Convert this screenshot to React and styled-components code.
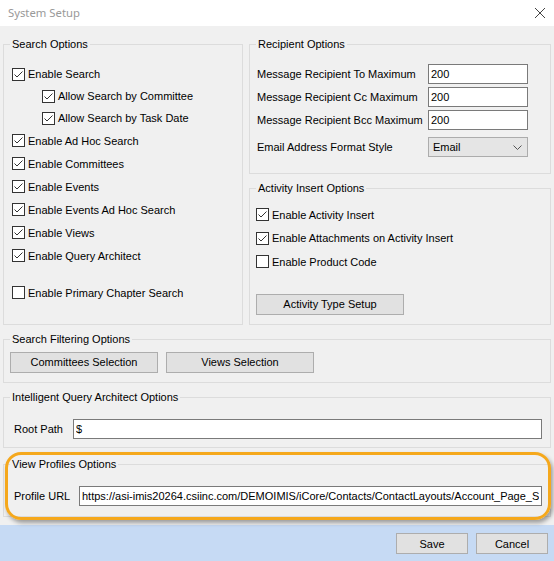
import React from 'react';
import styled, { createGlobalStyle } from 'styled-components';

const GlobalStyle = createGlobalStyle`
  html, body { margin: 0; padding: 0; background: #f0f0f0; }
  body { font-family: "Liberation Sans", Arial, sans-serif; font-size: 11px; color: #000; }
  * { box-sizing: border-box; }
`;

const Window = styled.div`
  width: 554px;
  height: 561px;
  display: flex;
  flex-direction: column;
  background: #f0f0f0;
  overflow: hidden;
`;

const TitleBar = styled.div`
  height: 26px;
  flex: none;
  background: #fff;
  display: flex;
  align-items: center;
  justify-content: space-between;
  padding: 0 9px 0 8px;
`;

const TitleText = styled.span`
  font-family: "Noto Sans", "Open Sans", sans-serif;
  font-size: 11.3px;
  color: #999;
  line-height: 16px;
`;

const Body = styled.div`
  flex: 1;
  display: flex;
  flex-direction: column;
  padding: 18px 3px 0 3px;
`;

const TopGrid = styled.div`
  display: grid;
  grid-template-columns: 240px 302px;
  column-gap: 6px;
`;

const RightCol = styled.div`
  display: flex;
  flex-direction: column;
  gap: 14px;
`;

const GroupBox = styled.section`
  position: relative;
  display: flex;
  flex-direction: column;
  border: 1px solid #dcdcdc;
  margin-top: ${p => p.$mt || 0}px;
  ${p => (p.$grow ? 'flex: 1;' : '')}
`;

const GroupTitle = styled.div`
  align-self: flex-start;
  margin: -7px 0 0 6px;
  padding: 0 2px;
  background: #f0f0f0;
  line-height: 13px;
  white-space: nowrap;
`;

const Content = styled.div`
  display: flex;
  flex-direction: column;
  padding: ${p => p.$pad};
`;

const CheckRow = styled.label`
  display: flex;
  align-items: center;
  gap: 3px;
  height: ${p => p.$h}px;
  padding-left: ${p => p.$indent || 0}px;
  margin-top: ${p => p.$mt || 0}px;
  white-space: nowrap;
`;

const Box = styled.span`
  flex: none;
  width: 13px;
  height: 13px;
  border: 1px solid #333;
  background: #fff;
  display: inline-flex;
`;

const FieldGrid = styled.div`
  display: grid;
  grid-template-columns: 171px 100px;
  grid-auto-rows: 20px;
  row-gap: 3px;
  align-items: center;
  margin-top: ${p => p.$mt || 0}px;
`;

const FieldLabel = styled.span`
  white-space: nowrap;
`;

const TextInput = styled.input`
  width: 100%;
  height: 20px;
  border: 1px solid #7a7a7a;
  background: #fff;
  padding: 0 2px;
  margin: 0;
  font-family: "Liberation Sans", Arial, sans-serif;
  font-size: 11px;
  color: #000;
  outline: none;
  min-width: 0;
  ${p => (p.$flex ? 'flex: 1;' : '')}
`;

const SelectBox = styled.div`
  width: 100px;
  height: 20px;
  display: flex;
  align-items: center;
  justify-content: space-between;
  padding: 0 5px 0 4px;
  background: #e5e5e5;
  border: 1px solid #acacac;
`;

const Button = styled.button`
  width: ${p => p.$w}px;
  height: 21px;
  flex: none;
  margin: 0;
  margin-top: ${p => p.$mt || 0}px;
  padding: 0;
  background: #e1e1e1;
  border: 1px solid #adadad;
  border-radius: 0;
  font-family: "Liberation Sans", Arial, sans-serif;
  font-size: 11px;
  color: #000;
`;

const ButtonRow = styled.div`
  display: flex;
  gap: 8px;
`;

const InputRow = styled.div`
  display: flex;
  align-items: center;
`;

const RowLabel = styled.span`
  flex: none;
  width: ${p => p.$w}px;
  white-space: nowrap;
`;

const Highlight = styled.div`
  position: absolute;
  left: 1px;
  top: -13px;
  right: -1px;
  bottom: -4px;
  border: 3px solid #f5a81c;
  border-radius: 16px;
  box-shadow: 2px 3px 4px rgba(0, 0, 0, 0.35);
  pointer-events: none;
`;

const Footer = styled.div`
  height: 36px;
  flex: none;
  background: #c6daf4;
  display: flex;
  justify-content: flex-end;
  align-items: flex-start;
  gap: 8px;
  padding: 8px 6px 0 0;
`;

function CheckBox({ checked }) {
  return (
    <Box>
      {checked && (
        <svg width="11" height="11" viewBox="0 0 11 11">
          <path d="M1.5 5.5 L4 8 L9.5 2.5" fill="none" stroke="#333" strokeWidth="1" />
        </svg>
      )}
    </Box>
  );
}

function Check({ label, checked = true, h = 23, indent, mt }) {
  return (
    <CheckRow $h={h} $indent={indent} $mt={mt}>
      <CheckBox checked={checked} />
      <span>{label}</span>
    </CheckRow>
  );
}

export default function App() {
  return (
    <>
      <GlobalStyle />
      <Window>
        <TitleBar>
          <TitleText>System Setup</TitleText>
          <svg width="10" height="10" viewBox="0 0 10 10">
            <path d="M0 0 L10 10 M10 0 L0 10" stroke="#444" strokeWidth="1" />
          </svg>
        </TitleBar>
        <Body>
          <TopGrid>
            <GroupBox>
              <GroupTitle>Search Options</GroupTitle>
              <Content $pad="12px 0 0 8px">
                <Check label="Enable Search" h={22} />
                <Check label="Allow Search by Committee" h={22} indent={30} />
                <Check label="Allow Search by Task Date" h={22} indent={30} />
                <Check label="Enable Ad Hoc Search" />
                <Check label="Enable Committees" />
                <Check label="Enable Events" />
                <Check label="Enable Events Ad Hoc Search" />
                <Check label="Enable Views" />
                <Check label="Enable Query Architect" />
                <Check label="Enable Primary Chapter Search" checked={false} mt={14} />
              </Content>
            </GroupBox>
            <RightCol>
              <GroupBox>
                <GroupTitle>Recipient Options</GroupTitle>
                <Content $pad="13px 0 16px 7px">
                  <FieldGrid>
                    <FieldLabel>Message Recipient To Maximum</FieldLabel>
                    <TextInput readOnly defaultValue="200" />
                    <FieldLabel>Message Recipient Cc Maximum</FieldLabel>
                    <TextInput readOnly defaultValue="200" />
                    <FieldLabel>Message Recipient Bcc Maximum</FieldLabel>
                    <TextInput readOnly defaultValue="200" />
                  </FieldGrid>
                  <FieldGrid $mt={7}>
                    <FieldLabel>Email Address Format Style</FieldLabel>
                    <SelectBox>
                      <span>Email</span>
                      <svg width="9" height="5" viewBox="0 0 9 5">
                        <path d="M0.5 0.5 L4.5 4.5 L8.5 0.5" fill="none" stroke="#555" strokeWidth="1" />
                      </svg>
                    </SelectBox>
                  </FieldGrid>
                </Content>
              </GroupBox>
              <GroupBox $grow>
                <GroupTitle>Activity Insert Options</GroupTitle>
                <Content $pad="8px 0 9px 6px">
                  <Check label="Enable Activity Insert" h={23.5} />
                  <Check label="Enable Attachments on Activity Insert" h={23.5} />
                  <Check label="Enable Product Code" checked={false} h={23.5} />
                  <Button $w={148} $mt={20}>Activity Type Setup</Button>
                </Content>
              </GroupBox>
            </RightCol>
          </TopGrid>

          <GroupBox $mt={14}>
            <GroupTitle>Search Filtering Options</GroupTitle>
            <Content $pad="6px 0 9px 6px">
              <ButtonRow>
                <Button $w={148}>Committees Selection</Button>
                <Button $w={148}>Views Selection</Button>
              </ButtonRow>
            </Content>
          </GroupBox>

          <GroupBox $mt={14}>
            <GroupTitle>Intelligent Query Architect Options</GroupTitle>
            <Content $pad="15px 8px 8px 10px">
              <InputRow>
                <RowLabel $w={59}>Root Path</RowLabel>
                <TextInput $flex readOnly defaultValue="$" />
              </InputRow>
            </Content>
          </GroupBox>

          <GroupBox $mt={16}>
            <GroupTitle>View Profiles Options</GroupTitle>
            <Content $pad="15px 8px 10px 10px">
              <InputRow>
                <RowLabel $w={65}>Profile URL</RowLabel>
                <TextInput
                  $flex
                  readOnly
                  defaultValue="https://asi-imis20264.csiinc.com/DEMOIMIS/iCore/Contacts/ContactLayouts/Account_Page_Staff.aspx"
                />
              </InputRow>
            </Content>
            <Highlight />
          </GroupBox>
        </Body>
        <Footer>
          <Button $w={72}>Save</Button>
          <Button $w={72}>Cancel</Button>
        </Footer>
      </Window>
    </>
  );
}
